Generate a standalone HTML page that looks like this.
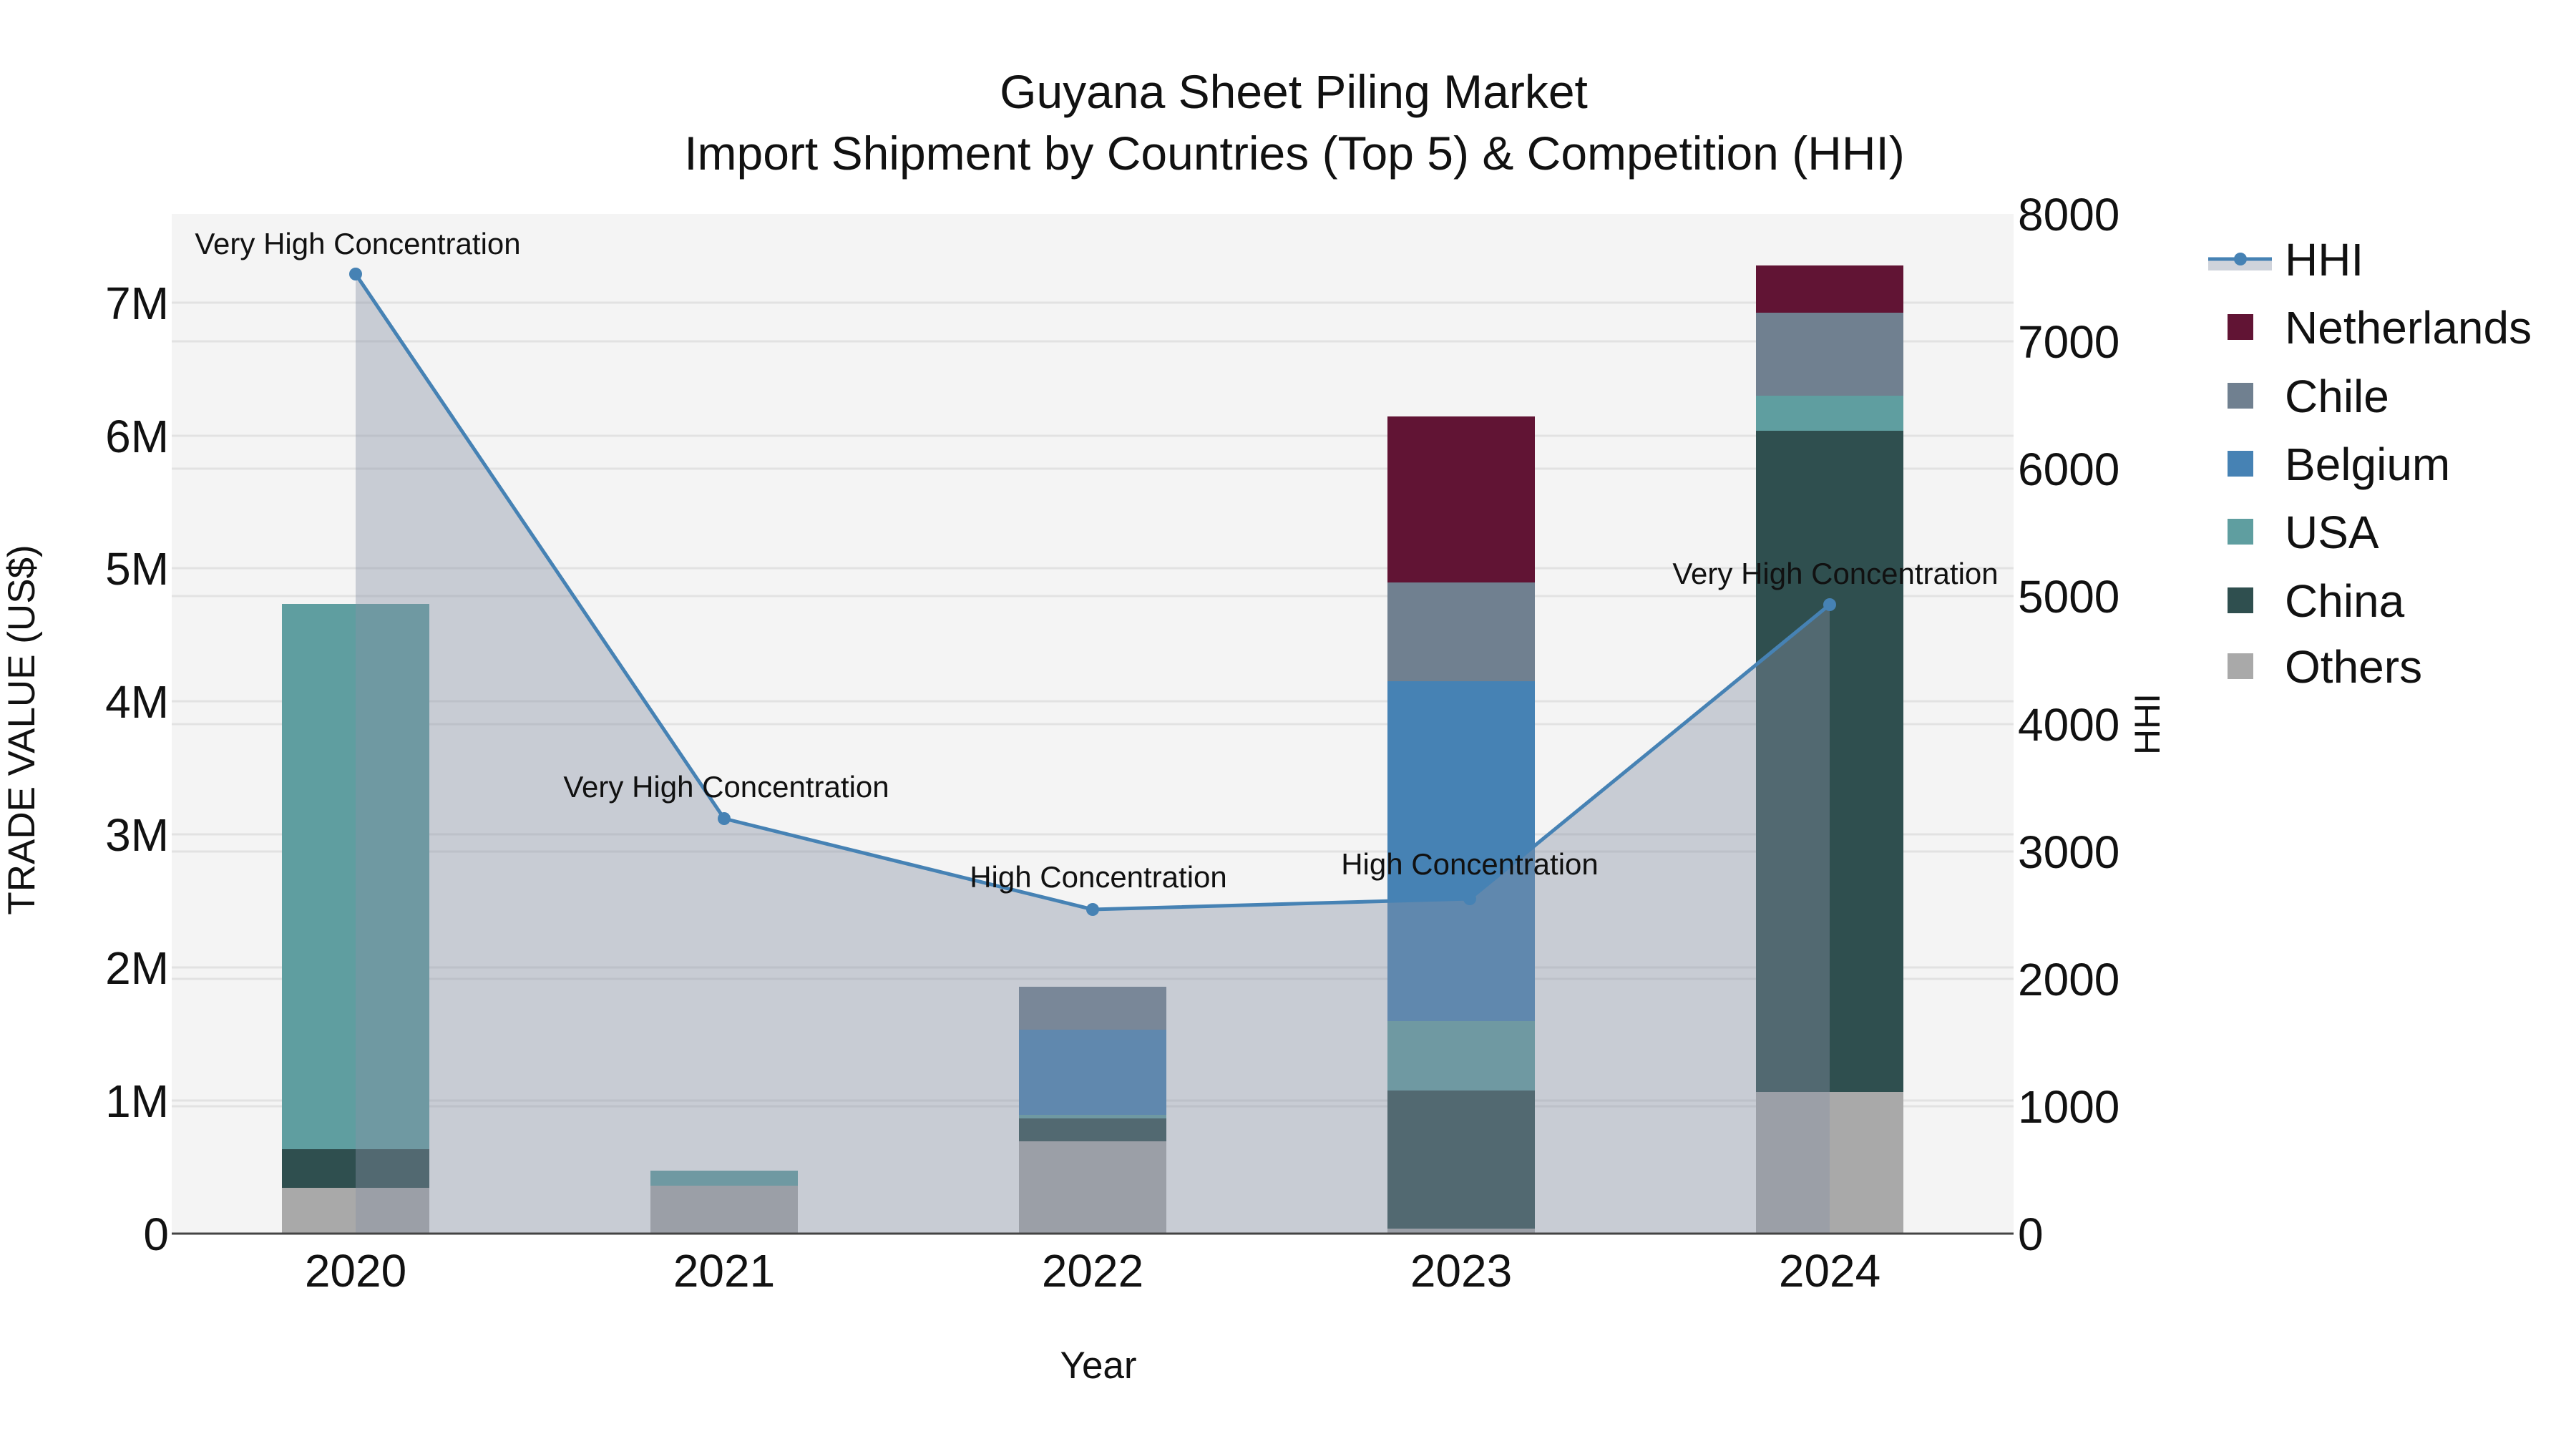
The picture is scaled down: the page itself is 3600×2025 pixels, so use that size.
<!DOCTYPE html>
<html><head><meta charset="utf-8"><style>html,body{margin:0;padding:0;background:#fff}svg{display:block}text{font-family:"Liberation Sans",Arial,sans-serif;fill:#111}</style></head><body>
<svg width="3600" height="2025" viewBox="0 0 3600 2025" xmlns="http://www.w3.org/2000/svg">
<rect width="3600" height="2025" fill="#fff"/>
<rect x="240" y="299" width="2574" height="1425" fill="#f4f4f4"/>
<g stroke="#e2e2e2" stroke-width="3">
<line x1="240" x2="2814" y1="1538" y2="1538"/><line x1="240" x2="2814" y1="1352" y2="1352"/><line x1="240" x2="2814" y1="1166" y2="1166"/><line x1="240" x2="2814" y1="980" y2="980"/><line x1="240" x2="2814" y1="794" y2="794"/><line x1="240" x2="2814" y1="609" y2="609"/><line x1="240" x2="2814" y1="423" y2="423"/>
<line x1="240" x2="2814" y1="1546" y2="1546"/><line x1="240" x2="2814" y1="1368" y2="1368"/><line x1="240" x2="2814" y1="1190" y2="1190"/><line x1="240" x2="2814" y1="1012" y2="1012"/><line x1="240" x2="2814" y1="833" y2="833"/><line x1="240" x2="2814" y1="655" y2="655"/><line x1="240" x2="2814" y1="477" y2="477"/>
</g>
<rect x="394" y="1660" width="206" height="64" fill="#a9a9a9"/>
<rect x="394" y="1606" width="206" height="54" fill="#2f4f4f"/>
<rect x="394" y="844" width="206" height="762" fill="#5f9ea0"/>
<rect x="909" y="1657" width="206" height="67" fill="#a9a9a9"/>
<rect x="909" y="1636" width="206" height="21" fill="#5f9ea0"/>
<rect x="1424" y="1595" width="206" height="129" fill="#a9a9a9"/>
<rect x="1424" y="1563" width="206" height="32" fill="#2f4f4f"/>
<rect x="1424" y="1558" width="206" height="5" fill="#5f9ea0"/>
<rect x="1424" y="1439" width="206" height="119" fill="#4682b4"/>
<rect x="1424" y="1379" width="206" height="60" fill="#708090"/>
<rect x="1939" y="1717" width="206" height="7" fill="#a9a9a9"/>
<rect x="1939" y="1524" width="206" height="193" fill="#2f4f4f"/>
<rect x="1939" y="1427" width="206" height="97" fill="#5f9ea0"/>
<rect x="1939" y="952" width="206" height="475" fill="#4682b4"/>
<rect x="1939" y="814" width="206" height="138" fill="#708090"/>
<rect x="1939" y="582" width="206" height="232" fill="#611434"/>
<rect x="2454" y="1526" width="206" height="198" fill="#a9a9a9"/>
<rect x="2454" y="602" width="206" height="924" fill="#2f4f4f"/>
<rect x="2454" y="553" width="206" height="49" fill="#5f9ea0"/>
<rect x="2454" y="437" width="206" height="116" fill="#708090"/>
<rect x="2454" y="371" width="206" height="66" fill="#611434"/>
<polygon points="497,1724 497,383 1012,1144 1527,1271 2054,1256 2557,845 2557,1724" fill="rgb(134,146,166)" fill-opacity="0.4"/>
<polyline points="497,383 1012,1144 1527,1271 2054,1256 2557,845" fill="none" stroke="#4682b4" stroke-width="5"/>
<g fill="#4682b4"><circle cx="497" cy="383" r="9"/><circle cx="1012" cy="1144" r="9"/><circle cx="1527" cy="1271" r="9"/><circle cx="2054" cy="1256" r="9"/><circle cx="2557" cy="845" r="9"/></g>
<line x1="240" x2="2814" y1="1724" y2="1724" stroke="#444" stroke-width="3"/>
<g font-size="42" text-anchor="middle">
<text x="500" y="355">Very High Concentration</text>
<text x="1015" y="1114">Very High Concentration</text>
<text x="1535" y="1240">High Concentration</text>
<text x="2054" y="1222">High Concentration</text>
<text x="2565" y="816">Very High Concentration</text>
</g>
<g font-size="66" text-anchor="middle">
<text x="1808" y="151">Guyana Sheet Piling Market</text>
<text x="1809" y="237">Import Shipment by Countries (Top 5) &amp; Competition (HHI)</text>
</g>
<g font-size="64" text-anchor="end">
<text x="236" y="1747">0</text><text x="236" y="1561">1M</text><text x="236" y="1375">2M</text><text x="236" y="1189">3M</text><text x="236" y="1003">4M</text><text x="236" y="817">5M</text><text x="236" y="632">6M</text><text x="236" y="446">7M</text>
</g>
<g font-size="64" text-anchor="start">
<text x="2820" y="1747">0</text><text x="2820" y="1569">1000</text><text x="2820" y="1391">2000</text><text x="2820" y="1213">3000</text><text x="2820" y="1035">4000</text><text x="2820" y="856">5000</text><text x="2820" y="678">6000</text><text x="2820" y="500">7000</text><text x="2820" y="322">8000</text>
</g>
<g font-size="64" text-anchor="middle">
<text x="497" y="1798">2020</text><text x="1012" y="1798">2021</text><text x="1527" y="1798">2022</text><text x="2042" y="1798">2023</text><text x="2557" y="1798">2024</text>
</g>
<text x="1535" y="1926" font-size="53" text-anchor="middle">Year</text>
<text transform="translate(48,1020) rotate(-90)" font-size="53" text-anchor="middle">TRADE VALUE (US$)</text>
<text transform="translate(3018,1012) rotate(-90)" font-size="50" text-anchor="middle">HHI</text>
<rect x="3086" y="364" width="89" height="14" fill="rgb(134,146,166)" fill-opacity="0.4"/>
<line x1="3086" x2="3175" y1="362" y2="362" stroke="#4682b4" stroke-width="5"/>
<circle cx="3131" cy="362" r="9" fill="#4682b4"/>
<rect x="3113" y="439" width="36" height="36" fill="#611434"/>
<rect x="3113" y="535" width="36" height="36" fill="#708090"/>
<rect x="3113" y="630" width="36" height="36" fill="#4682b4"/>
<rect x="3113" y="725" width="36" height="36" fill="#5f9ea0"/>
<rect x="3113" y="821" width="36" height="36" fill="#2f4f4f"/>
<rect x="3113" y="913" width="36" height="36" fill="#a9a9a9"/>
<g font-size="64">
<text x="3193" y="385">HHI</text><text x="3193" y="480">Netherlands</text><text x="3193" y="576">Chile</text><text x="3193" y="671">Belgium</text><text x="3193" y="766">USA</text><text x="3193" y="862">China</text><text x="3193" y="954">Others</text>
</g>
</svg>
</body></html>
